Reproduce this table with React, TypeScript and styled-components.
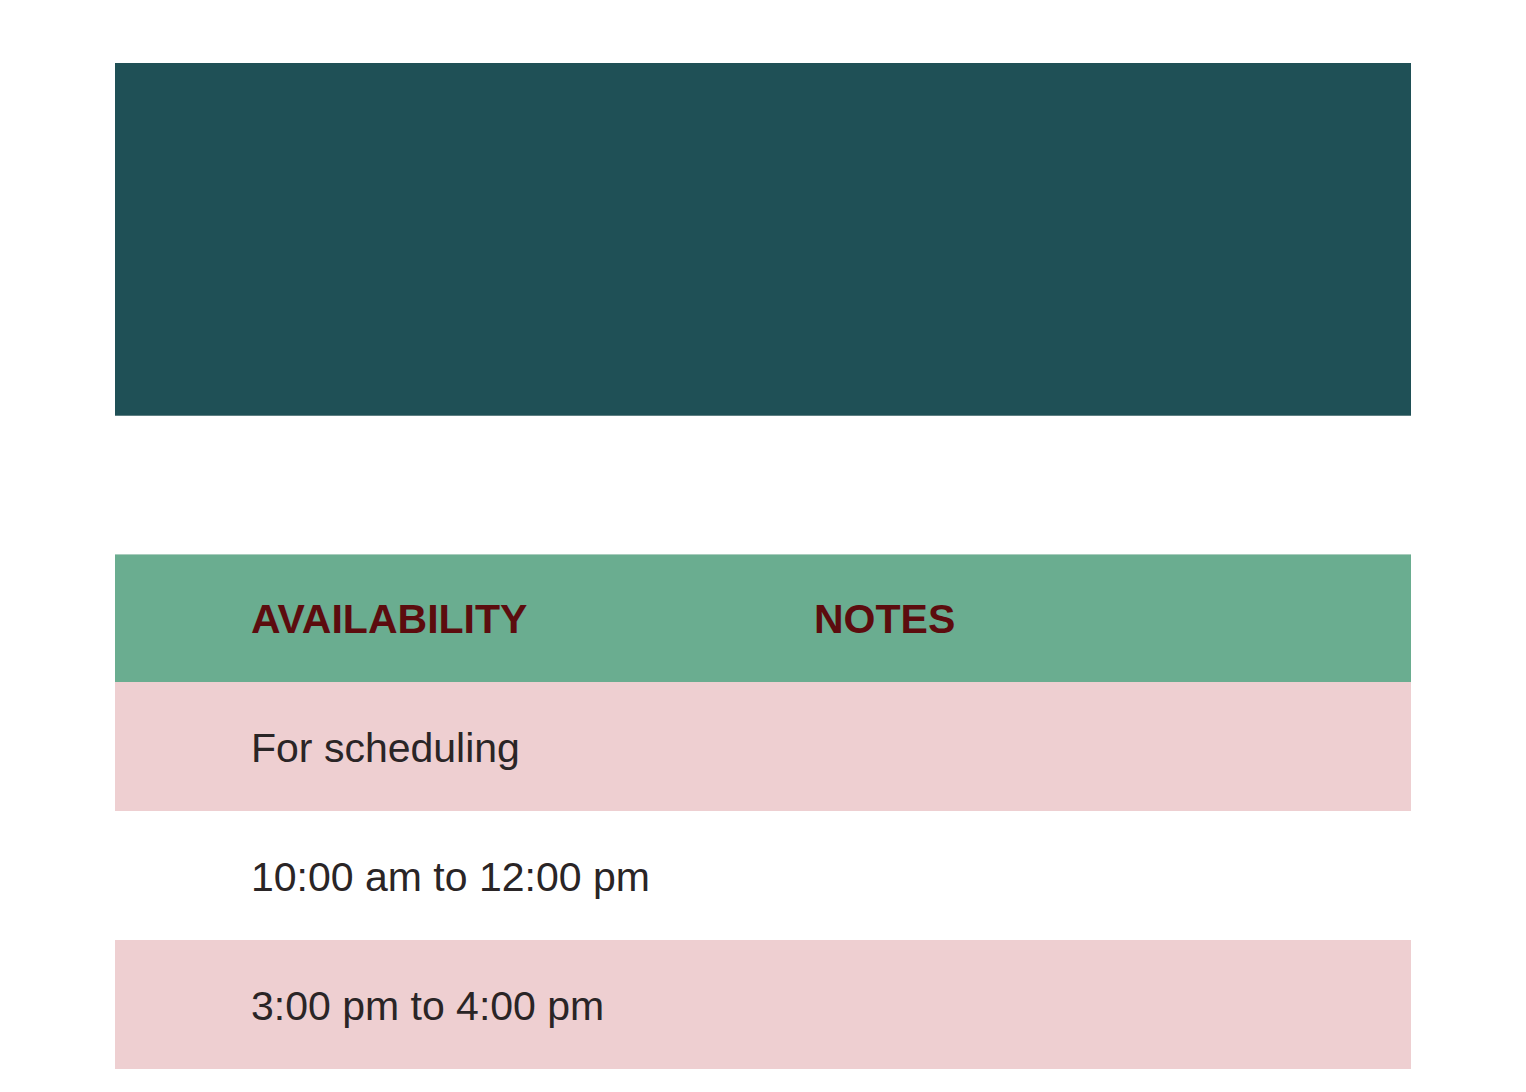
import React from 'react'
import styled, { createGlobalStyle } from 'styled-components'

const GlobalStyle = createGlobalStyle`
  body {
    margin: 0;
    background: #ffffff;
    font-family: 'Liberation Sans', Arial, sans-serif;
  }
`

const rows = [
  { availability: 'For scheduling', notes: '', shaded: true },
  { availability: '10:00 am to 12:00 pm', notes: '', shaded: false },
  { availability: '3:00 pm to 4:00 pm', notes: '', shaded: true },
]

const App: React.FC = () => {
  return (
    <>
      <GlobalStyle />
      <Page>
        <Banner />
        <Table>
          <HeaderRow>
            <HeaderCell>AVAILABILITY</HeaderCell>
            <HeaderCell>NOTES</HeaderCell>
          </HeaderRow>
          {rows.map((row, i) => (
            <Row key={i} shaded={row.shaded ? 1 : 0}>
              <Cell>{row.availability}</Cell>
              <Cell>{row.notes}</Cell>
            </Row>
          ))}
        </Table>
      </Page>
    </>
  )
}

const Page = styled.div`
  width: 1296px;
  padding: 63px 0 0 115px;
  display: flex;
  flex-direction: column;
  gap: 138px;
`

const Banner = styled.div`
  height: 353px;
  background: #1f5056;
  border-bottom: 1px solid #5e7f82;
  box-sizing: border-box;
`

const Table = styled.div`
  display: flex;
  flex-direction: column;
`

const HeaderRow = styled.div`
  display: grid;
  grid-template-columns: 563px 1fr;
  height: 128px;
  align-items: center;
  background: #6aad90;
  border-top: 1px solid #a9cdbd;
  box-sizing: border-box;
`

const HeaderCell = styled.div`
  padding-left: 136px;
  font-weight: bold;
  font-size: 41px;
  color: #5c0c0e;
  padding-top: 2px;
`

const Row = styled.div<{ shaded: number }>`
  display: grid;
  grid-template-columns: 563px 1fr;
  height: 129px;
  align-items: center;
  background: ${props => (props.shaded ? '#eecfd1' : '#ffffff')};
`

const Cell = styled.div`
  padding-left: 136px;
  padding-top: 4px;
  font-size: 41px;
  color: #2a2526;
`

export default App
